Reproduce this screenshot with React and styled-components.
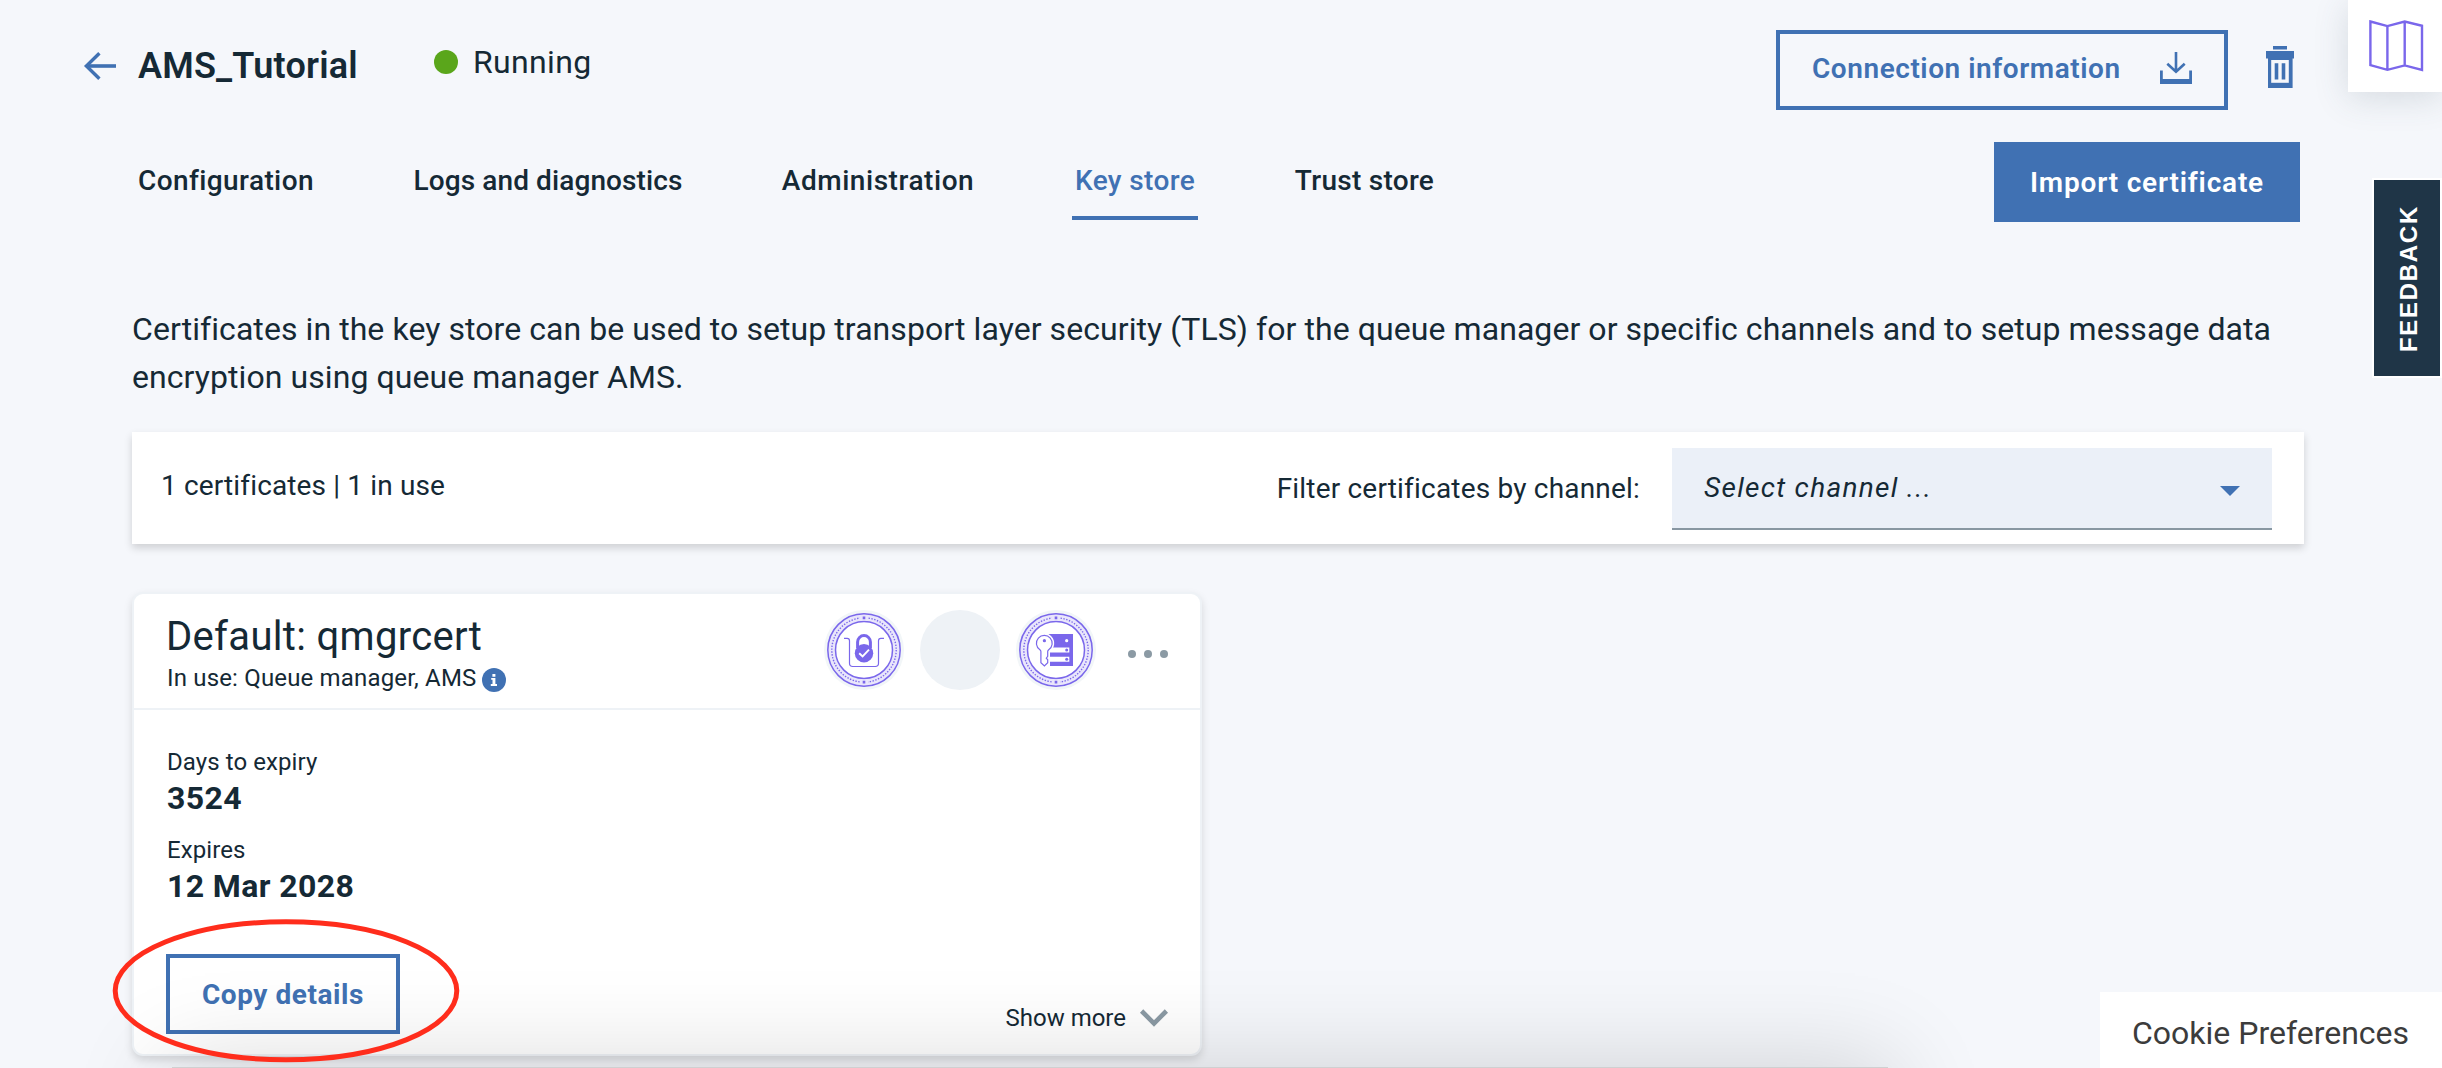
import React from 'react';
import styled, { createGlobalStyle } from 'styled-components';

const BLUE = '#4071b3';
const INK = '#152935';
const VIOLET = '#7a67eb';

const GlobalStyle = createGlobalStyle`
  * { box-sizing: border-box; }
  body { margin: 0; background: #f5f7fb; }
  button { font: inherit; color: inherit; background: none; border: 0; padding: 0; margin: 0; }
  h1, h2, p, dl, dd, dt { margin: 0; font-weight: 400; }
`;

const Page = styled.div`
  position: relative;
  width: 2442px;
  height: 1068px;
  overflow: hidden;
  background: #f5f7fb;
  color: ${INK};
  font-family: Roboto, "Liberation Sans", sans-serif;
`;

const Icon = styled.svg`
  display: block;
  flex: none;
  overflow: visible;
`;

/* ---------- header ---------- */

const Header = styled.header`
  display: flex;
  justify-content: space-between;
  align-items: flex-start;
  height: 110px;
  padding: 30px 148px 0 84px;
`;

const Identity = styled.div`
  display: flex;
  align-items: center;
  height: 72px;
`;

const Title = styled.h1`
  width: 296px;
  margin-left: 22px;
  font-size: 36px;
  line-height: 48px;
  font-weight: 600;
  letter-spacing: 0.2px;
`;

const Status = styled.div`
  display: flex;
  align-items: center;
  gap: 15px;
  margin: -8px 0 0 0;
  font-size: 32px;
  line-height: 40px;
  letter-spacing: 0.35px;
`;

const StatusDot = styled.span`
  width: 24px;
  height: 24px;
  border-radius: 50%;
  background: #5aa61b;
`;

const Actions = styled.div`
  display: flex;
  align-items: flex-start;
  gap: 38px;
`;

const OutlineButton = styled.button`
  display: flex;
  align-items: center;
  justify-content: space-between;
  width: ${(p) => p.$width}px;
  height: 80px;
  padding: 0 32px;
  border: 4px solid ${BLUE};
  color: ${BLUE};
  font-size: 28px;
  line-height: 36px;
  font-weight: ${(p) => p.$weight || 600};
  letter-spacing: ${(p) => p.$spacing}px;
  white-space: nowrap;
`;

const ButtonLabel = styled.span`
  padding-bottom: ${(p) => p.$raise || 0}px;
  padding-top: ${(p) => p.$drop || 0}px;
`;

const TrashButton = styled.button`
  margin-top: 16px;
`;

/* ---------- tabs ---------- */

const TabRow = styled.div`
  display: flex;
  justify-content: space-between;
  height: 80px;
  margin-top: 32px;
  padding: 0 142px 0 136px;
`;

const Tabs = styled.nav`
  display: flex;
  gap: 96px;
`;

const Tab = styled.button`
  display: flex;
  align-items: center;
  justify-content: center;
  width: ${(p) => p.$width}px;
  height: 78px;
  padding-top: 3px;
  border-bottom: 4px solid ${(p) => (p.$active ? BLUE : 'transparent')};
  color: ${(p) => (p.$active ? BLUE : INK)};
  font-size: 28px;
  font-weight: 500;
  letter-spacing: ${(p) => p.$spacing}px;
  white-space: nowrap;
`;

const ImportButton = styled.button`
  width: 306px;
  height: 80px;
  background: ${BLUE};
  color: #fff;
  font-size: 28px;
  font-weight: 600;
  letter-spacing: 0.8px;
`;

/* ---------- content ---------- */

const Main = styled.main`
  display: flex;
  flex-direction: column;
  width: 2172px;
  margin: 83px 0 0 132px;
`;

const Description = styled.p`
  font-size: 32px;
  line-height: 48px;
  letter-spacing: 0.07px;
`;

const FilterBar = styled.section`
  display: flex;
  align-items: center;
  height: 112px;
  margin-top: 31px;
  padding: 0 32px 0 29px;
  background: #fff;
  box-shadow: 0 4px 8px rgba(0, 0, 0, 0.16);
  font-size: 28px;
  line-height: 36px;
`;

const Count = styled.span`
  flex: 1;
  margin-top: -5px;
  letter-spacing: 0.14px;
`;

const FilterLabel = styled.label`
  margin: 1px 32px 0 0;
  letter-spacing: 0.19px;
`;

const ChannelSelect = styled.div`
  display: flex;
  align-items: center;
  justify-content: space-between;
  width: 600px;
  height: 82px;
  margin-top: 2px;
  padding: 0 32px 0 32px;
  border-bottom: 2px solid #8897a2;
  background: #ebf0f8;
  font-style: italic;
  letter-spacing: 1.3px;
`;

const Caret = styled.span`
  margin-top: 5px;
  border: 10px solid transparent;
  border-top-color: ${BLUE};
  border-bottom: 0;
`;

const Card = styled.article`
  display: flex;
  flex-direction: column;
  width: 1070px;
  height: 464px;
  margin-top: 48px;
  border: 2px solid #eef2f6;
  border-radius: 11px;
  background: #fff;
  box-shadow: 0 4px 8px rgba(0, 0, 0, 0.13);
`;

const CardHeader = styled.div`
  display: flex;
  justify-content: space-between;
  height: 116px;
  padding: 0 32px;
  border-bottom: 2px solid #eef2f6;
`;

const CardHeading = styled.div`
  padding-top: 19px;
`;

const CardTitle = styled.h2`
  font-size: 40px;
  line-height: 48px;
  letter-spacing: 0.32px;
`;

const Usage = styled.div`
  display: flex;
  align-items: center;
  gap: 6px;
  margin: 1px 0 0 1px;
  font-size: 24px;
  line-height: 32px;
  letter-spacing: 0.17px;
`;

const InfoIcon = styled(Icon)`
  margin-top: 4px;
`;

const Badges = styled.div`
  display: flex;
  align-items: center;
  gap: 16px;
  height: 112px;
`;

const Badge = styled.div`
  width: 80px;
  height: 80px;
  border-radius: 50%;
  background: ${(p) => (p.$empty ? '#eef2f6' : '#f2f6f8')};
`;

const MoreButton = styled.button`
  display: flex;
  gap: 8px;
  margin: 8px 0 0 16px;
`;

const MoreDot = styled.span`
  width: 8px;
  height: 8px;
  border-radius: 50%;
  background: #8b9aa4;
`;

const CardBody = styled.div`
  display: flex;
  flex: 1;
  flex-direction: column;
  justify-content: space-between;
  padding: 36px 32px 20px;
`;

const Facts = styled.dl`
  display: flex;
  flex-direction: column;
  gap: 16px;
  padding-left: 1px;
`;

const FactLabel = styled.dt`
  font-size: 24px;
  line-height: 32px;
  letter-spacing: 0.08px;
`;

const FactValue = styled.dd`
  font-size: 32px;
  line-height: 40px;
  font-weight: 700;
  letter-spacing: 0.4px;
`;

const CardFooter = styled.div`
  display: flex;
  align-items: flex-end;
  justify-content: space-between;
`;

const ShowMore = styled.button`
  display: flex;
  align-items: center;
  gap: 14px;
  font-size: 24px;
  line-height: 32px;
`;

/* ---------- floating parts ---------- */

const Guide = styled.aside`
  position: absolute;
  top: 0;
  right: 0;
  width: 94px;
  height: 92px;
  padding: 20px 0 0 21px;
  background: #fff;
  box-shadow: 0 6px 34px rgba(60, 85, 95, 0.17);
`;

const Feedback = styled.button`
  position: absolute;
  top: 178px;
  right: 0;
  display: flex;
  align-items: center;
  justify-content: center;
  width: 70px;
  height: 200px;
  padding: 0 4px 2px 0;
  border: 2px solid #fff;
  background: #1f3547;
  color: #fff;
  font-family: "Liberation Sans", Arial, sans-serif;
  font-size: 24px;
  font-weight: 700;
  letter-spacing: 1.7px;
  writing-mode: vertical-rl;
  transform: rotate(180deg);
`;

const Cookies = styled.aside`
  position: absolute;
  right: 0;
  bottom: 0;
  width: 342px;
  height: 76px;
  padding: 21px 0 0 32px;
  background: #fff;
  color: #3c3c3c;
  font-size: 32px;
  line-height: 40px;
`;

const BottomSheet = styled.div`
  position: absolute;
  top: 1067px;
  left: 172px;
  width: 1716px;
  height: 400px;
  background: #cfd0d1;
  box-shadow: 0 0 90px 8px rgba(0, 0, 0, 0.14);
`;

const Highlight = styled(Icon)`
  position: absolute;
  top: 918px;
  left: 111px;
`;

/* ---------- drawings ---------- */

const BackArrow = () => (
  <Icon width="32" height="28" viewBox="0 0 32 28" fill="none" stroke={BLUE} strokeWidth="3.6">
    <path d="M32 14H3" />
    <path d="M15.4 1.2L2.4 14l13 12.8" strokeWidth="3.4" />
  </Icon>
);

const DownloadIcon = () => (
  <Icon width="32" height="36" viewBox="0 0 32 36" fill={BLUE}>
    <path d="M0 18.6h2.8V27h26.4v-8.4H32V32H0z" />
    <path d="M16 0v19.5M7.3 11.8l8.7 8 8.7-8" fill="none" stroke={BLUE} strokeWidth="2.6" />
  </Icon>
);

const TrashIcon = () => (
  <Icon width="28" height="42" viewBox="0 0 28 42" fill={BLUE}>
    <path d="M7 0h14v3.6H7zM0 5h28v7.6h-1.4V42H2V12.6H0z" />
    <path fill="#f5f7fb" d="M5.2 14h17.6v22.8H5.2z" />
    <path d="M8.7 17.2h3.6v16.4H8.7zM15.7 17.2h3.6v16.4h-3.6z" />
  </Icon>
);

const MapIcon = () => (
  <Icon width="54" height="52" viewBox="0 0 54 52" fill="none" stroke={VIOLET} strokeWidth="2.4">
    <path d="M1.4 1.5l17 4.6 17.3-4.5L53 5.8V50l-17.3-4.6-17.3 4.4-17-4.7zM18.4 6v43.8M35.7 1.6v43.8" />
  </Icon>
);

const Seal = ({ children }) => (
  <Icon width="80" height="80" viewBox="-40 -40 80 80">
    <circle r="36.2" fill="#e9e6fb" stroke={VIOLET} strokeWidth="1.5" />
    <circle r="28.5" fill="#fff" stroke={VIOLET} strokeWidth="1.5" />
    <circle r="32.2" fill="none" stroke={VIOLET} strokeWidth="1.4" strokeDasharray="1.4 1.49" />
    <path fill="#e9e6fb" d="M-4-35h8v5.4h-8zM-4 29.6h8V35h-8z" />
    <path fill={VIOLET} d="M-1.3-33.4h2.6v2.6h-2.6zM-1.3 30.8h2.6v2.6h-2.6z" />
    {children}
  </Icon>
);

const QueueLock = () => (
  <Seal>
    <path
      d="M-20-11.6h3.2q2.3 0 2.3 2.3v22.6q0 3.2 3.2 3.2h22.6q3.2 0 3.2-3.2V-9.3q0-2.3 2.3-2.3H20"
      fill="none"
      stroke={VIOLET}
      strokeWidth="1.2"
    />
    <path d="M-6.4-2v-6a6.4 6.4 0 0 1 12.8 0v6" fill="none" stroke={VIOLET} strokeWidth="3" />
    <circle cy="3.2" r="9.2" fill={VIOLET} />
    <path d="M-4.8 3.2L-1.4 6.4 5-.4" fill="none" stroke="#fff" strokeWidth="1.9" />
  </Seal>
);

const KEY_PATH =
  'M-15.1 1.6v11.2l3.5 3.2 3.3-3.2v-3l-1.4-1.6 1.4-1.8V1.6q0-1 1-1.8a7.9 7.9 0 1 0-8.8 0q1 .8 1 1.8z';

const ServerKey = () => (
  <Seal>
    <path fill={VIOLET} d="M-8-16h25v32H-8z" />
    <path fill="#fff" d="M-8-2.5h21.3v4.9H-8zM-8 6.8h21.3v5H-8zM-8 3.2V-2.5h2v19h-2z" />
    <circle cx="10.7" cy="-9.3" r="1.6" fill="#fff" />
    <circle cx="10.7" cy="0" r="1.5" fill={VIOLET} />
    <circle cx="10.7" cy="9.3" r="1.5" fill={VIOLET} />
    <path d={KEY_PATH} fill="#fff" stroke="#fff" strokeWidth="4" />
    <path d={KEY_PATH} fill="#fff" stroke={VIOLET} strokeWidth="1.2" />
    <circle cx="-11.6" cy="-9.3" r="1.6" fill={VIOLET} />
  </Seal>
);

const Info = () => (
  <InfoIcon width="24" height="24" viewBox="0 0 24 24">
    <circle cx="12" cy="12" r="12" fill={BLUE} />
    <path fill="#fff" d="M10.4 6h3v2.7h-3zM9.2 10h4.2v6.1h1.6v1.8H8.8v-1.8h1.7v-4.3H9.2z" />
  </InfoIcon>
);

const Chevron = () => (
  <Icon width="28" height="18" viewBox="0 0 28 18" fill="none" stroke="#8b9aa4" strokeWidth="4.6">
    <path d="M1.6 2L14 14.4 26.4 2" />
  </Icon>
);

const tabs = [
  { label: 'Configuration', width: 180, spacing: 0.4 },
  { label: 'Logs and diagnostics', width: 272, spacing: 0.1 },
  { label: 'Administration', width: 196, spacing: 0.55 },
  { label: 'Key store', width: 126, spacing: 0.36, active: true },
  { label: 'Trust store', width: 141, spacing: 0.28 },
];

const facts = [
  ['Days to expiry', '3524'],
  ['Expires', '12 Mar 2028'],
];

export default function App() {
  return (
    <Page>
      <GlobalStyle />
      <Header>
        <Identity>
          <BackArrow />
          <Title>AMS_Tutorial</Title>
          <Status>
            <StatusDot />
            Running
          </Status>
        </Identity>
        <Actions>
          <OutlineButton $width={452} $spacing={0.55}>
            <ButtonLabel $raise={2}>Connection information</ButtonLabel>
            <DownloadIcon />
          </OutlineButton>
          <TrashButton aria-label="Delete">
            <TrashIcon />
          </TrashButton>
        </Actions>
      </Header>

      <TabRow>
        <Tabs>
          {tabs.map((t) => (
            <Tab key={t.label} $width={t.width} $spacing={t.spacing} $active={t.active}>
              {t.label}
            </Tab>
          ))}
        </Tabs>
        <ImportButton>Import certificate</ImportButton>
      </TabRow>

      <Main>
        <Description>
          Certificates in the key store can be used to setup transport layer security (TLS) for the
          queue manager or specific channels and to setup message data encryption using queue
          manager AMS.
        </Description>

        <FilterBar>
          <Count>1 certificates | 1 in use</Count>
          <FilterLabel>Filter certificates by channel:</FilterLabel>
          <ChannelSelect>
            Select channel ...
            <Caret />
          </ChannelSelect>
        </FilterBar>

        <Card>
          <CardHeader>
            <CardHeading>
              <CardTitle>Default: qmgrcert</CardTitle>
              <Usage>
                In use: Queue manager, AMS
                <Info />
              </Usage>
            </CardHeading>
            <Badges>
              <Badge>
                <QueueLock />
              </Badge>
              <Badge $empty />
              <Badge>
                <ServerKey />
              </Badge>
              <MoreButton aria-label="Options">
                <MoreDot />
                <MoreDot />
                <MoreDot />
              </MoreButton>
            </Badges>
          </CardHeader>
          <CardBody>
            <Facts>
              {facts.map(([label, value]) => (
                <div key={label}>
                  <FactLabel>{label}</FactLabel>
                  <FactValue>{value}</FactValue>
                </div>
              ))}
            </Facts>
            <CardFooter>
              <OutlineButton $width={234} $spacing={0.55} $weight={700}>
                <ButtonLabel $drop={2}>Copy details</ButtonLabel>
              </OutlineButton>
              <ShowMore>
                Show more
                <Chevron />
              </ShowMore>
            </CardFooter>
          </CardBody>
        </Card>
      </Main>

      <BottomSheet />
      <Guide>
        <MapIcon />
      </Guide>
      <Feedback>FEEDBACK</Feedback>
      <Cookies>Cookie Preferences</Cookies>
      <Highlight width="350" height="146" viewBox="0 0 350 146">
        <ellipse cx="175" cy="72.8" rx="170.8" ry="69" fill="none" stroke="#ff2d1c" strokeWidth="5" />
      </Highlight>
    </Page>
  );
}
